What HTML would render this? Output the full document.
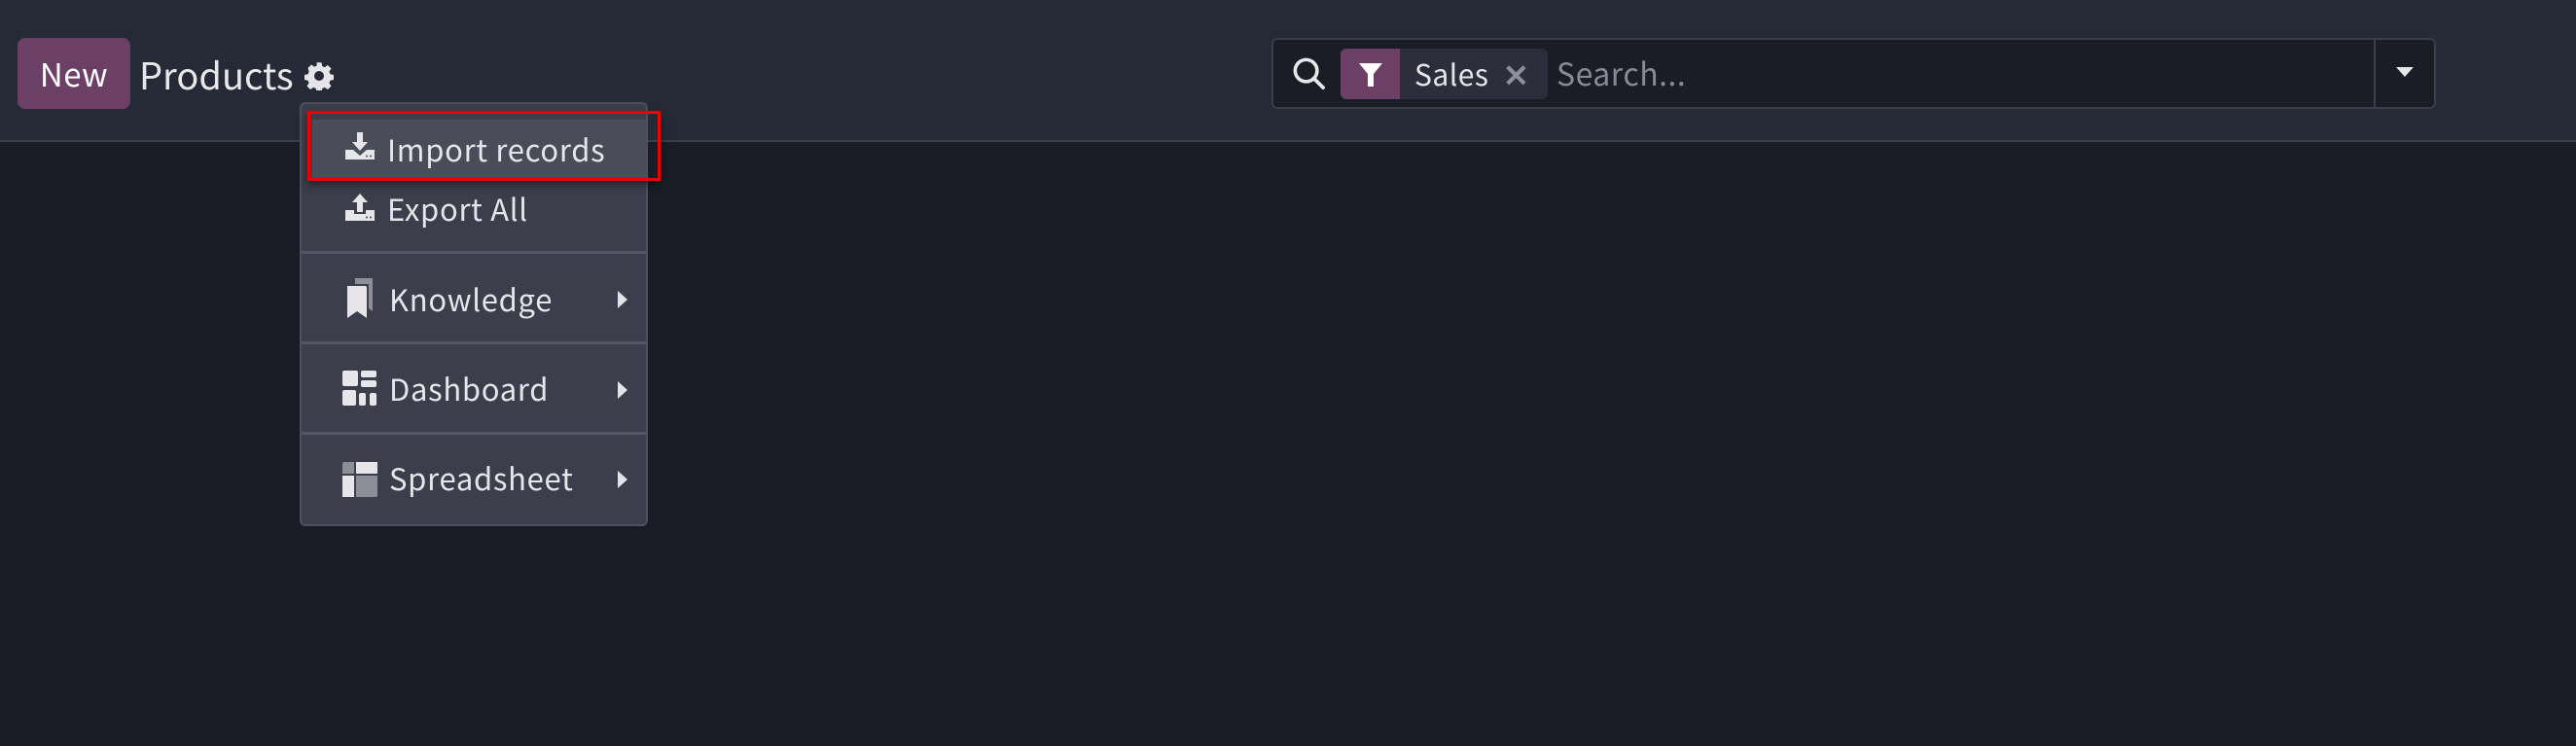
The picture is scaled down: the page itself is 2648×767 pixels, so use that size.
<!DOCTYPE html>
<html><head><meta charset="utf-8"><style>
*{margin:0;padding:0;box-sizing:border-box}
body{width:2648px;height:767px;background:#1b1d26;font-family:"Noto Sans CJK JP","Liberation Sans",sans-serif;color:#e4e4e8;position:relative;overflow:hidden}
.top{position:absolute;left:0;top:0;width:2648px;height:146px;background:#262a36;border-bottom:2px solid #3b3e4b}
.abs{position:absolute}
.new{left:18px;top:39px;width:116px;height:73px;background:#6b3f66;border-radius:8px;color:#fff;font-size:33px;line-height:73px;text-align:center;letter-spacing:0.5px}
.title{left:143px;top:50px;font-size:38px;line-height:52px;color:#e8e8ea;letter-spacing:0}
.search{left:1307px;top:39px;width:1197px;height:73px;background:#1b1d26;border:2px solid #3a3d4a;border-radius:6px}
.dd{left:308px;top:105px;width:358px;height:436px;background:#3c3e4b;border:2px solid #4d505d;border-radius:6px}
.item{position:absolute;left:0;width:354px;font-size:31px;line-height:40px;color:#e6e6ea;letter-spacing:0.7px}
.div{position:absolute;left:0;width:354px;height:3px;background:#535664}
.caret{position:absolute;left:325px;width:0;height:0;border-top:9px solid transparent;border-bottom:9px solid transparent;border-left:10px solid #e4e4e8}
</style></head><body>
<div class="top"></div>
<div class="abs new">New</div>
<div class="abs title">Products</div>
<svg class="abs" style="left:313px;top:63px" width="30" height="30" viewBox="0 0 24 24"><path fill="#e6e6ea" d="M10 1h4l.6 3 2 .9 2.6-1.7 2.8 2.8-1.7 2.6.9 2 3 .6v4l-3 .6-.9 2 1.7 2.6-2.8 2.8-2.6-1.7-2 .9-.6 3h-4l-.6-3-2-.9-2.6 1.7-2.8-2.8 1.7-2.6-.9-2-3-.6v-4l3-.6.9-2L2.8 5.6l2.8-2.8 2.6 1.7 2-.9zM12 8a4 4 0 100 8 4 4 0 000-8z"/></svg>

<div class="abs search"></div>
<div class="abs" style="left:2440px;top:41px;width:2px;height:69px;background:#3a3d4a"></div>
<svg class="abs" style="left:1328px;top:58px" width="36" height="36" viewBox="0 0 32 32"><circle cx="13" cy="13" r="10" fill="none" stroke="#e8e8ea" stroke-width="3.2"/><path d="M20.5 20.5l8 8" stroke="#e8e8ea" stroke-width="3.4" stroke-linecap="round"/></svg>
<div class="abs" style="left:1378px;top:50px;width:213px;height:52px;background:#2c2f3b;border-radius:6px"></div>
<div class="abs" style="left:1378px;top:50px;width:61px;height:52px;background:#6b3f66;border-radius:6px 0 0 6px"></div>
<svg class="abs" style="left:1396px;top:63px" width="26" height="28" viewBox="0 0 26 28"><path d="M1 2h24l-9 11v13l-6 0V13z" fill="#fff"/></svg>
<div class="abs" style="left:1454px;top:55px;font-size:30px;line-height:40px;color:#e6e6ea;letter-spacing:0.5px">Sales</div>
<div class="abs" style="left:1545px;top:54px;font-size:32px;line-height:44px;color:#8d8f9a;font-weight:bold">✕</div>
<div class="abs" style="left:1600px;top:54px;font-size:32px;line-height:42px;color:#878a96;letter-spacing:0.5px">Search...</div>
<div class="abs" style="left:2463px;top:69px;width:0;height:0;border-left:9px solid transparent;border-right:9px solid transparent;border-top:10px solid #e8e8ea"></div>

<div class="abs dd">
  <div class="abs" style="left:11px;top:16px;width:343px;height:60px;background:#4a4c58"></div>
  <svg class="abs" style="left:45px;top:29px" width="30" height="30" viewBox="0 0 30 30"><path d="M12 0h6v10h5l-8 9-8-9h5z" fill="#e6e6ea"/><path d="M0 18h8l7 6 7-6h8v10H0z" fill="#e6e6ea"/><circle cx="22" cy="24.5" r="1" fill="#4a4c58"/><circle cx="26" cy="24.5" r="1" fill="#4a4c58"/></svg>
  <div class="item" style="left:88px;top:26px">Import records</div>
  <svg class="abs" style="left:45px;top:92px" width="30" height="30" viewBox="0 0 30 30"><path d="M15 0l8 9h-5v10h-6V9H7z" fill="#e6e6ea"/><path d="M0 17h9v4h12v-4h9v11H0z" fill="#e6e6ea"/><circle cx="22" cy="24.5" r="1" fill="#3c3e4b"/><circle cx="26" cy="24.5" r="1" fill="#3c3e4b"/></svg>
  <div class="item" style="left:88px;top:87px">Export All</div>
  <div class="div" style="top:151px"></div>
  <svg class="abs" style="left:45px;top:179px" width="30" height="42" viewBox="0 0 30 42"><path d="M10 0h18v34l-4-3V6H10z" fill="#8c8e98"/><path d="M2 8h18a2 2 0 012 2v31l-10-7-10 7z" fill="#e6e6ea"/><path d="M8 6h15v26l-1-1V9a1 1 0 00-1-1H8z" fill="#3c3e4b"/></svg>
  <div class="item" style="left:90px;top:180px">Knowledge</div>
  <div class="caret" style="top:192px"></div>
  <div class="div" style="top:244px"></div>
  <svg class="abs" style="left:42px;top:274px" width="36" height="36" viewBox="0 0 36 36"><rect x="0" y="0" width="16" height="16" rx="2" fill="#e6e6ea"/><rect x="19" y="0" width="16" height="7" rx="2" fill="#e6e6ea"/><rect x="19" y="10" width="16" height="7" rx="2" fill="#e6e6ea"/><rect x="0" y="20" width="14" height="16" rx="2" fill="#e6e6ea"/><rect x="17" y="23" width="7" height="13" rx="2" fill="#e6e6ea"/><rect x="28" y="23" width="7" height="13" rx="2" fill="#e6e6ea"/></svg>
  <div class="item" style="left:90px;top:272px">Dashboard</div>
  <div class="caret" style="top:285px"></div>
  <div class="div" style="top:337px"></div>
  <svg class="abs" style="left:42px;top:368px" width="36" height="36" viewBox="0 0 36 36"><path d="M2 0h10v12H0V2a2 2 0 012-2z" fill="#8c8e98"/><rect x="14" y="0" width="22" height="12" fill="#e6e6ea"/><rect x="0" y="14" width="12" height="22" fill="#e6e6ea"/><path d="M14 14h22v20a2 2 0 01-2 2H14z" fill="#8c8e98"/></svg>
  <div class="item" style="left:90px;top:364px">Spreadsheet</div>
  <div class="caret" style="top:377px"></div>
</div>
<div class="abs" style="left:316px;top:114px;width:363px;height:72px;border:3px solid #ee0000;box-shadow:0 4px 8px rgba(0,0,0,.5)"></div>
</body></html>
